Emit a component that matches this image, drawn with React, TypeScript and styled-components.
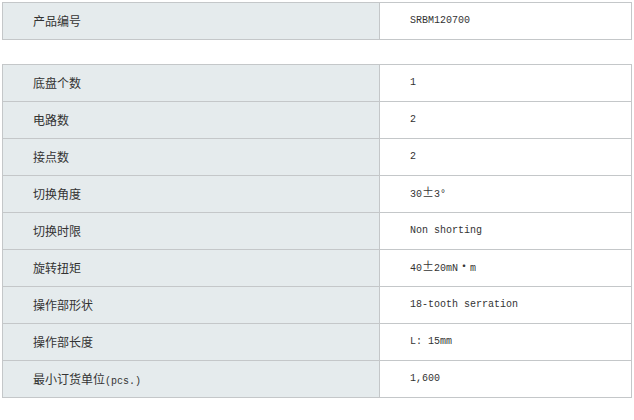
import React from "react";
import styled, { createGlobalStyle } from "styled-components";

const GlobalStyle = createGlobalStyle`
  html, body { margin: 0; padding: 0; background: #ffffff; }
  body { padding: 2px; }
`;

const Page = styled.div`
  display: flex;
  flex-direction: column;
  gap: 24px;
  width: 630px;
`;

const SpecTable = styled.table`
  width: 630px;
  border-collapse: collapse;
  table-layout: fixed;
`;

const Row = styled.tr`
  height: 37px;
`;

const LabelCell = styled.th`
  width: 377px;
  box-sizing: border-box;
  border: 1px solid #c4c7c9;
  background: #e5ebed;
  padding: 0 0 1px 30px;
  text-align: left;
  font-weight: normal;
  font-family: "Noto Sans CJK SC", "Liberation Sans", sans-serif;
  font-size: 12px;
  color: #333333;
  height: 37px;
`;

const ValueCell = styled.td`
  box-sizing: border-box;
  border: 1px solid #c4c7c9;
  background: #ffffff;
  padding: 0 0 0 30px;
  font-family: "Liberation Mono", "Noto Sans CJK SC", monospace;
  font-size: 10px;
  line-height: 14px;
  color: #333333;
  height: 37px;
`;

const Small = styled.span`
  font-family: "Liberation Mono", monospace;
  font-size: 10px;
`;

const Wide = styled.span`
  font-family: "Noto Sans CJK SC", sans-serif;
  font-size: 12px;
  line-height: 1;
`;

const top: [React.ReactNode, React.ReactNode][] = [["产品编号", "SRBM120700"]];

const specs: [React.ReactNode, React.ReactNode][] = [
  ["底盘个数", "1"],
  ["电路数", "2"],
  ["接点数", "2"],
  [
    "切换角度",
    <>
      30<Wide>±</Wide>3°
    </>,
  ],
  ["切换时限", "Non shorting"],
  [
    "旋转扭矩",
    <>
      40<Wide>±</Wide>20mN<Wide>・</Wide>m
    </>,
  ],
  ["操作部形状", "18-tooth serration"],
  ["操作部长度", "L: 15mm"],
  [
    <>
      最小订货单位<Small>(pcs.)</Small>
    </>,
    "1,600",
  ],
];

function Table({ rows }: { rows: [React.ReactNode, React.ReactNode][] }) {
  return (
    <SpecTable>
      <tbody>
        {rows.map(([label, value], i) => (
          <Row key={i}>
            <LabelCell>{label}</LabelCell>
            <ValueCell>{value}</ValueCell>
          </Row>
        ))}
      </tbody>
    </SpecTable>
  );
}

export default function App() {
  return (
    <>
      <GlobalStyle />
      <Page>
        <Table rows={top} />
        <Table rows={specs} />
      </Page>
    </>
  );
}
